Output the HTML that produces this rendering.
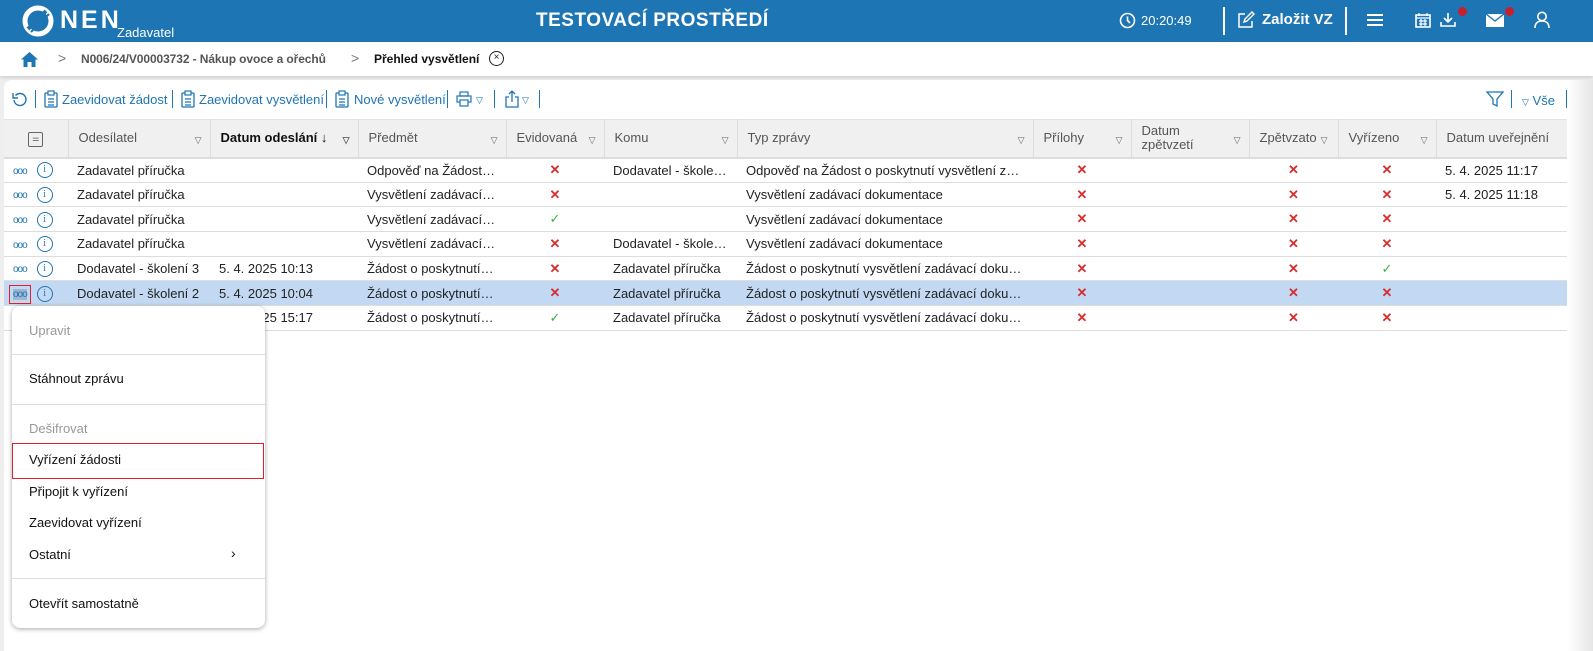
<!DOCTYPE html>
<html><head><meta charset="utf-8"><style>
*{box-sizing:border-box;margin:0;padding:0}
body{width:1593px;height:651px;overflow:hidden;background:#fff;font-family:"Liberation Sans",sans-serif;font-size:13px;color:#222;position:relative}
.top{position:absolute;left:0;top:0;width:1593px;height:42px;background:#1e75b3;color:#fff}
.abs{position:absolute}
.bc{position:absolute;top:42px;left:0;width:1593px;height:34px;background:#fff;box-shadow:0 2px 3px rgba(0,0,0,.12)}
.grey{position:absolute;top:76px;left:0;width:1593px;height:575px;background:#eeeeee}
.panel{position:absolute;top:80px;left:4px;width:1563px;height:571px;background:#fff;border-radius:8px 0 0 0}
.tb{color:#1e75b3;font-size:13px;position:absolute;top:92px;white-space:nowrap}
.sep{position:absolute;top:90px;width:1px;height:18px;background:#1e75b3}
table{border-collapse:collapse;table-layout:fixed;position:absolute;left:4px;top:119px;width:1563px}
th{height:38px;background:#f0f0f0;font-weight:normal;color:#555;text-align:left;padding:0 10px;border-right:1px solid #ddd;border-bottom:2px solid #ddd;border-top:1px solid #e3e3e3;position:relative;font-size:13px;line-height:14px}
th .f{position:absolute;right:8px;top:13px;font-size:9px;color:#666}
td{height:24.7px;border-bottom:1px solid #ddd;padding:0 9px;white-space:nowrap;overflow:hidden;text-overflow:ellipsis;font-size:13px}
tr.sel td{background:#c3d9f3}
.x{color:#d62d2d;text-align:center;font-weight:bold;font-size:13px}
.ok{color:#3cb043;text-align:center;font-size:13px}
.dots{color:#1e75b3;font-size:10px;letter-spacing:-1px}
.info{display:inline-block;width:16px;height:16px;border:1.3px solid #1e75b3;border-radius:50%;color:#1e75b3;font-size:10px;text-align:center;line-height:13px;font-family:"Liberation Serif",serif;margin-left:10px;vertical-align:middle}
.menu{position:absolute;left:12px;top:306px;width:253px;height:322px;background:#fff;border-radius:8px;box-shadow:0 1px 5px rgba(0,0,0,.35)}
.mi{position:absolute;left:17px;font-size:13px;color:#111}
.mi.dis{color:#999}
.hr{position:absolute;left:0;width:253px;height:1px;background:#ddd}
</style></head><body>
<div class="top">
  <svg class="abs" style="left:22px;top:5px" width="32" height="32" viewBox="0 0 32 32"><circle cx="16" cy="16" r="13" fill="none" stroke="#fff" stroke-width="5"/><path d="M6 24 L24 6" stroke="#1e75b3" stroke-width="4"/><path d="M9 27 L27 9" stroke="#1e75b3" stroke-width="2"/></svg>
  <div class="abs" style="left:60px;top:6px;font-size:25px;font-weight:bold;letter-spacing:3px">NEN</div>
  <div class="abs" style="left:117px;top:25px;font-size:13px">Zadavatel</div>
  <div class="abs" style="left:536px;top:10px;font-size:19px;font-weight:bold;letter-spacing:.5px">TESTOVACÍ PROSTŘEDÍ</div>
  <svg class="abs" style="left:1119px;top:12px" width="17" height="17" viewBox="0 0 17 17"><circle cx="8.5" cy="8.5" r="7" fill="none" stroke="#fff" stroke-width="1.6"/><path d="M8.5 4.5V8.5L11 11" fill="none" stroke="#fff" stroke-width="1.6"/></svg>
  <div class="abs" style="left:1141px;top:13px;font-size:13px">20:20:49</div>
  <div class="abs" style="left:1223px;top:7px;width:2px;height:28px;background:#fff"></div>
  <svg class="abs" style="left:1237px;top:11px" width="18" height="18" viewBox="0 0 18 18"><path d="M8 3H2V16H15V10" fill="none" stroke="#fff" stroke-width="1.5"/><path d="M7 11L8 8 15 1 17 3 10 10Z" fill="none" stroke="#fff" stroke-width="1.4"/></svg>
  <div class="abs" style="left:1262px;top:11px;font-size:15px;font-weight:bold">Založit VZ</div>
  <div class="abs" style="left:1345px;top:7px;width:2px;height:28px;background:#fff"></div>
  <div class="abs" style="left:1367px;top:14px;width:16px;height:2px;background:#fff;box-shadow:0 5px 0 #fff,0 10px 0 #fff"></div>
  <svg class="abs" style="left:1415px;top:12px" width="16" height="16" viewBox="0 0 16 16"><rect x="1" y="3" width="14" height="12" fill="none" stroke="#fff" stroke-width="1.6"/><path d="M4 1V4M12 1V4M1 6H15M4 9H12M4 12H12M6 7V14M10 7V14" stroke="#fff" stroke-width="1.2"/></svg>
  <svg class="abs" style="left:1439px;top:12px" width="18" height="16" viewBox="0 0 18 16"><path d="M9 1V9M5 6L9 10 13 6M2 10V14H16V10" fill="none" stroke="#fff" stroke-width="1.6"/></svg>
  <div class="abs" style="left:1458px;top:7px;width:9px;height:9px;border-radius:50%;background:#c8202b"></div>
  <svg class="abs" style="left:1486px;top:14px" width="18" height="13" viewBox="0 0 18 13"><rect width="18" height="13" fill="#fff"/><path d="M0 0L9 7 18 0" fill="none" stroke="#1e75b3" stroke-width="1.4"/></svg>
  <div class="abs" style="left:1505px;top:7px;width:9px;height:9px;border-radius:50%;background:#c8202b"></div>
  <svg class="abs" style="left:1534px;top:11px" width="16" height="18" viewBox="0 0 16 18"><circle cx="8" cy="5.5" r="4.2" fill="none" stroke="#fff" stroke-width="1.6"/><path d="M1 17C1 12 4 10 8 10S15 12 15 17" fill="none" stroke="#fff" stroke-width="1.6"/></svg>
</div>
<div class="grey"></div>
<div class="bc">
  <svg class="abs" style="left:20px;top:9px" width="19" height="17" viewBox="0 0 19 17"><path d="M9.5 1L1 8.5H3.5V16H7.5V11H11.5V16H15.5V8.5H18Z" fill="#1e75b3"/></svg>
  <div class="abs" style="left:58px;top:8px;color:#777;font-size:14px">&gt;</div>
  <div class="abs" style="left:81px;top:10px;color:#555;font-size:12px;font-weight:bold;letter-spacing:-.1px">N006/24/V00003732 - Nákup ovoce a ořechů</div>
  <div class="abs" style="left:351px;top:8px;color:#777;font-size:14px">&gt;</div>
  <div class="abs" style="left:374px;top:10px;color:#111;font-size:12px;font-weight:bold">Přehled vysvětlení</div>
  <div class="abs" style="left:489px;top:9px;width:15px;height:15px;border:1.3px solid #222;border-radius:50%;font-size:10px;text-align:center;line-height:12px">×</div>
</div>
<div class="panel"></div>
<div class="abs" style="right:0;top:80px;width:26px;height:571px;background:linear-gradient(to right,#fff,#e6e6e6)"></div>
<svg class="abs" style="left:12px;top:91px" width="16" height="16" viewBox="0 0 16 16"><path d="M3.5 4.5A6 6 0 1 1 2 9" fill="none" stroke="#1e75b3" stroke-width="1.4"/><path d="M1 2V7H6" fill="none" stroke="#1e75b3" stroke-width="1.4"/></svg>
<div class="sep" style="left:35px"></div>
<svg class="abs" style="left:44px;top:90px" width="14" height="18" viewBox="0 0 14 18"><rect x="1" y="3" width="12" height="14" rx="1" fill="none" stroke="#1e75b3" stroke-width="1.3"/><rect x="4" y="1" width="6" height="4" fill="#fff" stroke="#1e75b3" stroke-width="1.2"/><path d="M4 9H10M4 12H10M4 15H10" stroke="#1e75b3" stroke-width="1.2"/></svg>
<div class="tb" style="left:62px">Zaevidovat žádost</div>
<div class="sep" style="left:172px"></div>
<svg class="abs" style="left:181px;top:90px" width="14" height="18" viewBox="0 0 14 18"><rect x="1" y="3" width="12" height="14" rx="1" fill="none" stroke="#1e75b3" stroke-width="1.3"/><rect x="4" y="1" width="6" height="4" fill="#fff" stroke="#1e75b3" stroke-width="1.2"/><path d="M4 9H10M4 12H10M4 15H10" stroke="#1e75b3" stroke-width="1.2"/></svg>
<div class="tb" style="left:199px">Zaevidovat vysvětlení</div>
<div class="sep" style="left:326px"></div>
<svg class="abs" style="left:335px;top:90px" width="14" height="18" viewBox="0 0 14 18"><rect x="1" y="3" width="12" height="14" rx="1" fill="none" stroke="#1e75b3" stroke-width="1.3"/><rect x="4" y="1" width="6" height="4" fill="#fff" stroke="#1e75b3" stroke-width="1.2"/><path d="M4 9H10M4 12H10M4 15H10" stroke="#1e75b3" stroke-width="1.2"/></svg>
<div class="tb" style="left:354px">Nové vysvětlení</div>
<div class="sep" style="left:447px"></div>
<svg class="abs" style="left:456px;top:91px" width="16" height="16" viewBox="0 0 16 16"><rect x="4" y="1" width="8" height="4" fill="none" stroke="#1e75b3" stroke-width="1.2"/><rect x="1" y="5" width="14" height="6" fill="none" stroke="#1e75b3" stroke-width="1.2"/><rect x="4" y="9" width="8" height="6" fill="#fff" stroke="#1e75b3" stroke-width="1.2"/></svg>
<div class="tb" style="left:476px;font-size:9px;top:95px">▽</div>
<div class="sep" style="left:494px"></div>
<svg class="abs" style="left:504px;top:90px" width="16" height="18" viewBox="0 0 16 18"><path d="M5 7H2V17H14V7H11M8 12V1M5 4L8 1 11 4" fill="none" stroke="#1e75b3" stroke-width="1.3"/></svg>
<div class="tb" style="left:522px;font-size:9px;top:95px">▽</div>
<div class="sep" style="left:539px"></div>
<svg class="abs" style="left:1486px;top:90px" width="18" height="18" viewBox="0 0 18 18"><path d="M1 2H17L11 9V16L7 14V9Z" fill="none" stroke="#1e75b3" stroke-width="1.3"/></svg>
<div class="sep" style="left:1511px"></div>
<div class="tb" style="left:1522px;top:93px"><span style="font-size:9px">▽</span> Vše</div>
<div class="sep" style="left:1566px"></div>
<table>
<colgroup><col style="width:64px"><col style="width:142px"><col style="width:148px"><col style="width:148px"><col style="width:98px"><col style="width:133px"><col style="width:296px"><col style="width:98px"><col style="width:118px"><col style="width:89px"><col style="width:98px"><col style="width:131px"></colgroup>
<tr><th style="text-align:center"><span style="display:inline-block;width:15px;height:15px;border:1px solid #666;border-radius:2px;font-size:8px;line-height:12px">⚌</span></th>
<th>Odesílatel<span class="f">▽</span></th>
<th style="color:#111;font-weight:bold">Datum odeslání ↓<span class="f">▽</span></th>
<th>Předmět<span class="f">▽</span></th>
<th>Evidovaná<span class="f">▽</span></th>
<th>Komu<span class="f">▽</span></th>
<th>Typ zprávy<span class="f">▽</span></th>
<th>Přílohy<span class="f">▽</span></th>
<th>Datum<br>zpětvzetí<span class="f">▽</span></th>
<th>Zpětvzato<span class="f" style="right:10px">▽</span></th>
<th>Vyřízeno<span class="f">▽</span></th>
<th style="border-right:none">Datum uveřejnění</th></tr>
<tr><td><span class="dots">ooo</span><span class="info">i</span></td><td>Zadavatel příručka</td><td></td><td>Odpověď na Žádost o poskytnutí</td><td class="x">✕</td><td>Dodavatel - školení 1</td><td>Odpověď na Žádost o poskytnutí vysvětlení zadávací</td><td class="x">✕</td><td></td><td class="x">✕</td><td class="x">✕</td><td>5. 4. 2025 11:17</td></tr>
<tr><td><span class="dots">ooo</span><span class="info">i</span></td><td>Zadavatel příručka</td><td></td><td>Vysvětlení zadávací dokumentace</td><td class="x">✕</td><td></td><td>Vysvětlení zadávací dokumentace</td><td class="x">✕</td><td></td><td class="x">✕</td><td class="x">✕</td><td>5. 4. 2025 11:18</td></tr>
<tr><td><span class="dots">ooo</span><span class="info">i</span></td><td>Zadavatel příručka</td><td></td><td>Vysvětlení zadávací dokumentace</td><td class="ok">✓</td><td></td><td>Vysvětlení zadávací dokumentace</td><td class="x">✕</td><td></td><td class="x">✕</td><td class="x">✕</td><td></td></tr>
<tr><td><span class="dots">ooo</span><span class="info">i</span></td><td>Zadavatel příručka</td><td></td><td>Vysvětlení zadávací dokumentace</td><td class="x">✕</td><td>Dodavatel - školení 1</td><td>Vysvětlení zadávací dokumentace</td><td class="x">✕</td><td></td><td class="x">✕</td><td class="x">✕</td><td></td></tr>
<tr><td><span class="dots">ooo</span><span class="info">i</span></td><td>Dodavatel - školení 3</td><td>5. 4. 2025 10:13</td><td>Žádost o poskytnutí vysvětlení</td><td class="x">✕</td><td>Zadavatel příručka</td><td>Žádost o poskytnutí vysvětlení zadávací dokumentace</td><td class="x">✕</td><td></td><td class="x">✕</td><td class="ok">✓</td><td></td></tr>
<tr class="sel"><td><span class="dots" style="outline:1px solid #e0202b;outline-offset:3px;background:#9fb6d0">ooo</span><span class="info">i</span></td><td>Dodavatel - školení 2</td><td>5. 4. 2025 10:04</td><td>Žádost o poskytnutí vysvětlení</td><td class="x">✕</td><td>Zadavatel příručka</td><td>Žádost o poskytnutí vysvětlení zadávací dokumentace</td><td class="x">✕</td><td></td><td class="x">✕</td><td class="x">✕</td><td></td></tr>
<tr><td><span class="dots">ooo</span><span class="info">i</span></td><td>Dodavatel - školení 1</td><td>5. 4. 2025 15:17</td><td>Žádost o poskytnutí vysvětlení</td><td class="ok">✓</td><td>Zadavatel příručka</td><td>Žádost o poskytnutí vysvětlení zadávací dokumentace</td><td class="x">✕</td><td></td><td class="x">✕</td><td class="x">✕</td><td></td></tr>
</table>
<div class="menu">
  <div class="mi dis" style="top:17px">Upravit</div>
  <div class="hr" style="top:48px"></div>
  <div class="mi" style="top:65px">Stáhnout zprávu</div>
  <div class="hr" style="top:98px"></div>
  <div class="mi dis" style="top:115px">Dešifrovat</div>
  <div class="abs" style="left:0;top:137px;width:252px;height:36px;border:1px solid #e0202b"></div>
  <div class="mi" style="top:146px">Vyřízení žádosti</div>
  <div class="mi" style="top:178px">Připojit k vyřízení</div>
  <div class="mi" style="top:209px">Zaevidovat vyřízení</div>
  <div class="mi" style="top:241px">Ostatní</div>
  <div class="mi" style="top:239px;left:219px;font-size:14px">›</div>
  <div class="hr" style="top:272px"></div>
  <div class="mi" style="top:290px">Otevřít samostatně</div>
</div>
</body></html>
